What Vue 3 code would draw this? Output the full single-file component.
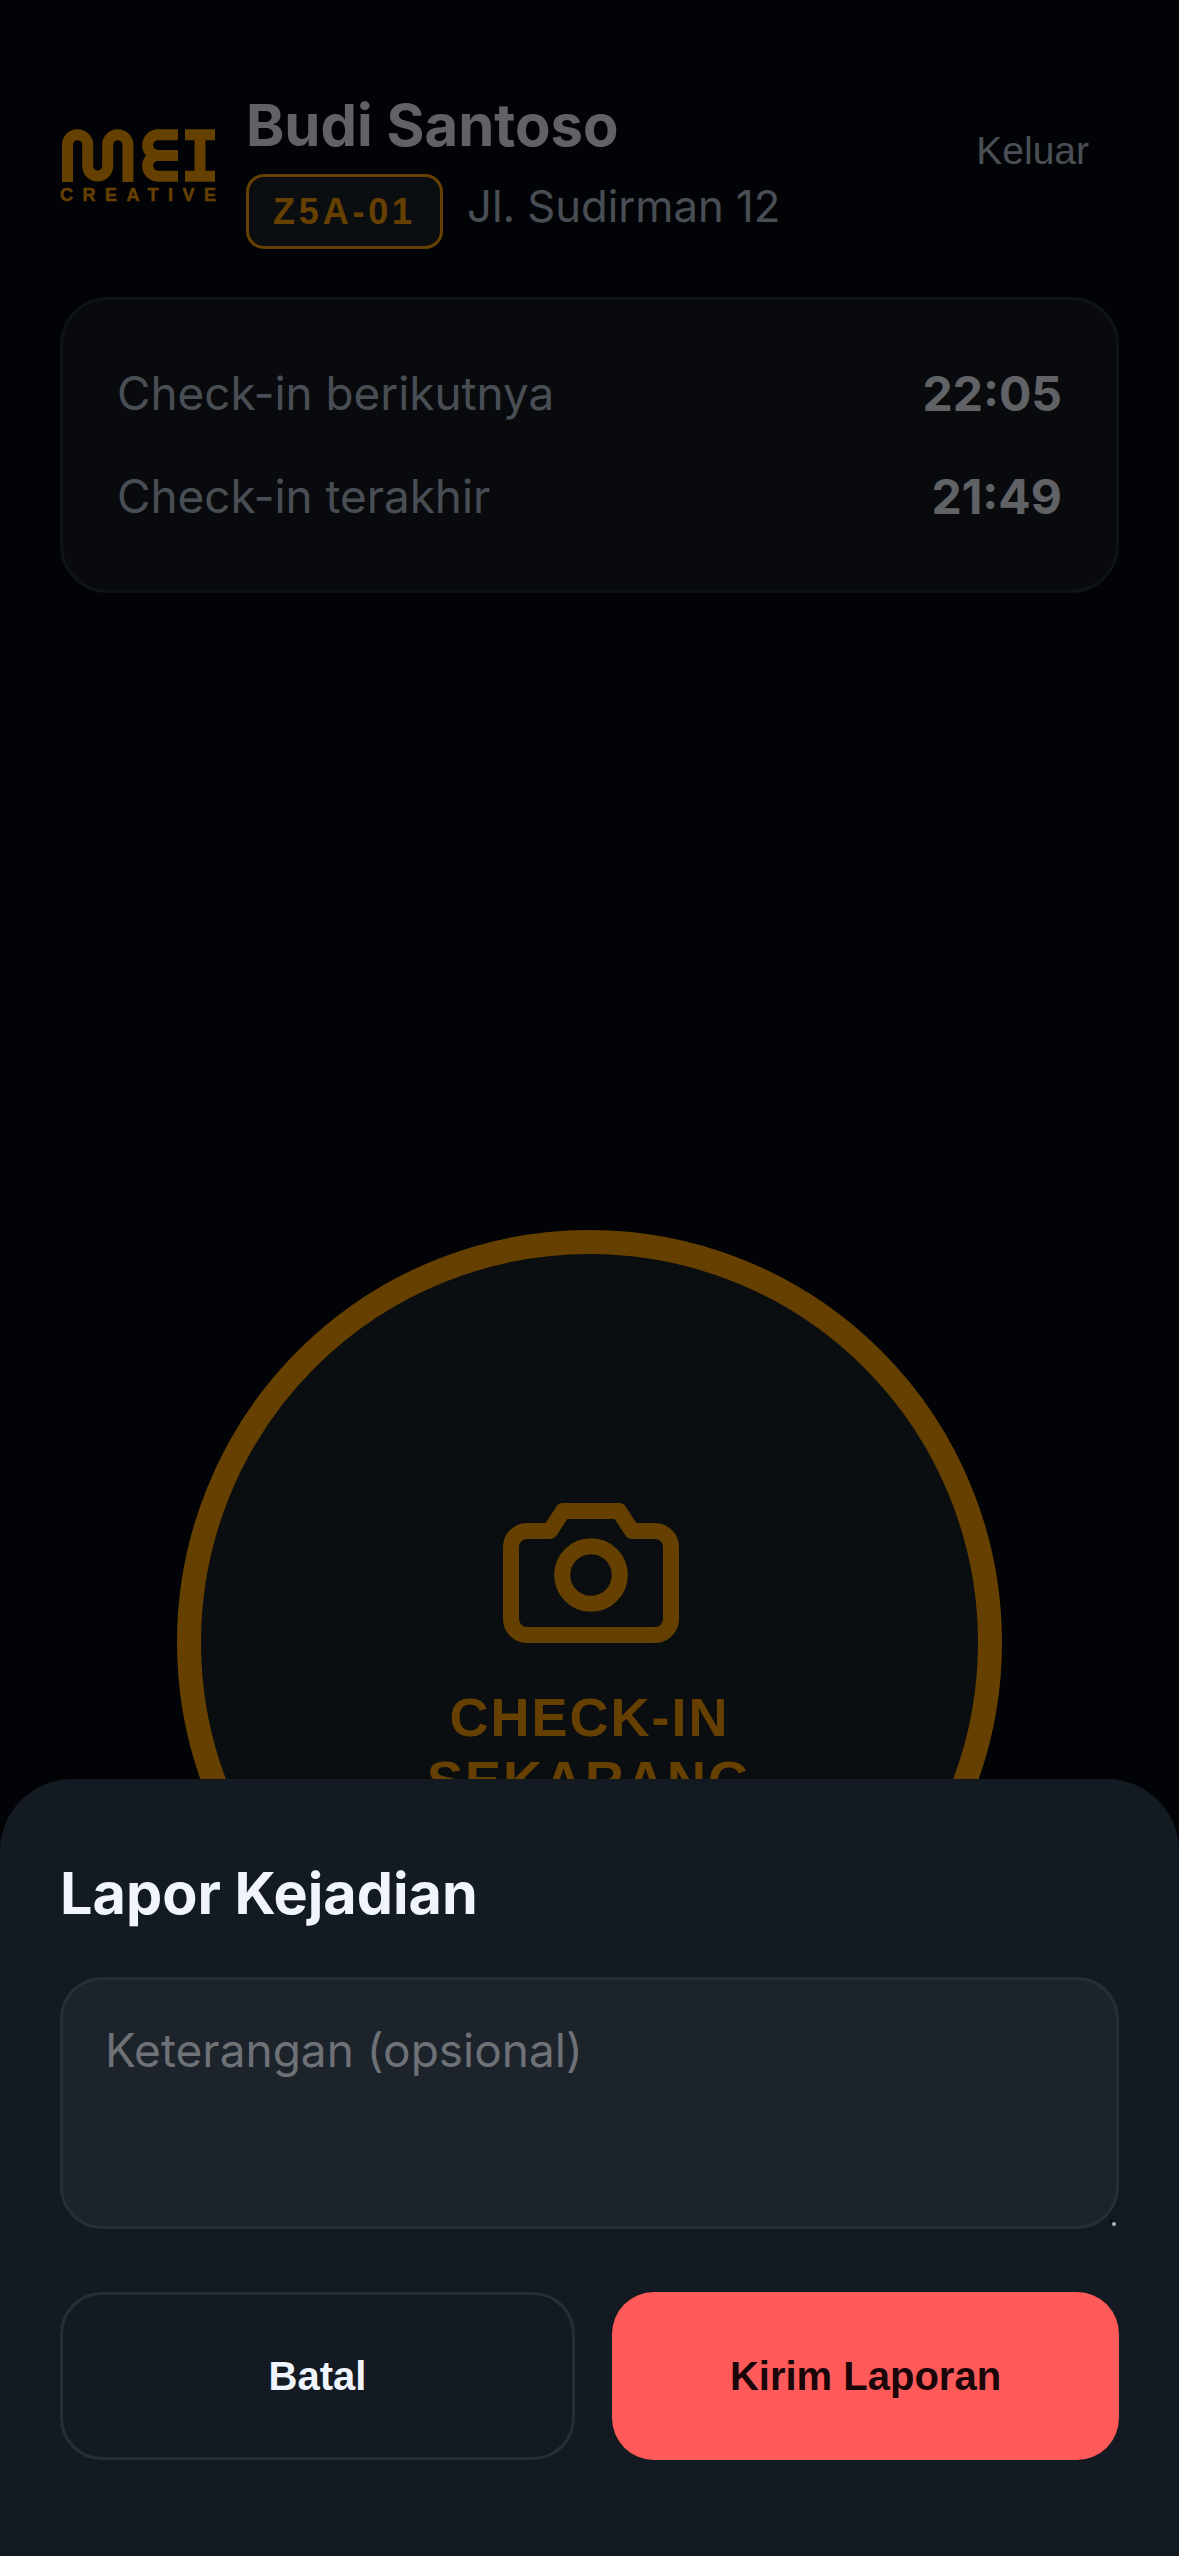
<template>
  <div class="page">
    <div class="main">
      <!-- header -->
      <header class="header">
        <svg class="logo" viewBox="0 0 157 80" width="157" height="80" aria-label="MEI Creative">
          <g transform="translate(-60 -127)" fill="none" stroke="#ffa000" stroke-width="11">
            <path d="M67.5 182V144.8a10.1 10.1 0 0 1 20.2 0V166a10 10 0 0 0 20 0V144.8a10.1 10.1 0 0 1 20.2 0V182" />
            <path d="M178 134.8H158A10.35 10.35 0 0 0 158 155.5H178M158 155.5A10.35 10.35 0 0 0 158 176.2H178" />
            <path d="M185 134.8H215M200 134.8V176.2M185 176.2H215" />
          </g>
          <text x="0" y="74" class="logo-text" textLength="156">CREATIVE</text>
        </svg>
        <div class="who">
          <div class="name">Budi Santoso</div>
          <div class="post">
            <span class="badge">Z5A-01</span>
            <span class="address">Jl. Sudirman 12</span>
          </div>
        </div>
        <button class="logout">Keluar</button>
      </header>

      <!-- jadwal -->
      <section class="card">
        <div v-for="row in rows" :key="row.label" class="row">
          <span class="row-label">{{ row.label }}</span>
          <span class="row-time">{{ row.time }}</span>
        </div>
      </section>

      <!-- tombol check-in -->
      <div class="checkin">
        <svg class="camera" viewBox="0 0 176 140" width="176" height="140" fill="none" stroke="#ffa000" stroke-width="16" stroke-linejoin="round">
          <path d="M60 8H116L129 28H152a16 16 0 0 1 16 16V116a16 16 0 0 1-16 16H24a16 16 0 0 1-16-16V44a16 16 0 0 1 16-16H47Z" />
          <circle cx="88" cy="72" r="28.8" />
        </svg>
        <div class="checkin-text">CHECK-IN<br>SEKARANG</div>
      </div>
    </div>

    <div class="overlay"></div>

    <!-- sheet lapor -->
    <div class="sheet">
      <h2 class="sheet-title">Lapor Kejadian</h2>
      <div class="note-wrap">
        <textarea class="note" placeholder="Keterangan (opsional)"></textarea>
      </div>
      <div class="actions">
        <button class="btn btn-cancel">Batal</button>
        <button class="btn btn-send">Kirim Laporan</button>
      </div>
    </div>
  </div>
</template>

<script setup>
const rows = [
  { label: 'Check-in berikutnya', time: '22:05' },
  { label: 'Check-in terakhir', time: '21:49' }
]
</script>

<style>
html, body {
  margin: 0;
  background: #020306;
}
</style>

<style scoped>
* {
  box-sizing: border-box;
}

.page {
  position: relative;
  width: 1179px;
  height: 2556px;
  overflow: hidden;
  background: #05080f;
  font-family: Inter, 'Liberation Sans', sans-serif;
}

.main {
  padding: 90px 60px 0;
}

.header {
  display: flex;
  align-items: flex-start;
  margin-bottom: 48px;
}

.logo {
  flex: none;
  margin-top: 37px;
  margin-right: 29px;
}

.logo-text {
  font-family: 'Liberation Sans', Arial, sans-serif;
  font-weight: 700;
  font-size: 18px;
  fill: #ffa000;
  stroke: #ffa000;
  stroke-width: 0.4px;
}

.who {
  flex: 1;
}

.name {
  font-size: 58px;
  font-weight: 700;
  line-height: 70px;
  color: #f0f5fd;
}

.post {
  display: flex;
  align-items: center;
  gap: 24px;
  margin-top: 14px;
}

.badge {
  width: 197px;
  height: 75px;
  border: 3px solid #ffa000;
  border-radius: 18px;
  background: #1c232b;
  color: #ffa000;
  font-family: 'Liberation Sans', Arial, sans-serif;
  font-weight: 700;
  font-size: 36px;
  letter-spacing: 3.8px;
  display: flex;
  align-items: center;
  justify-content: center;
}

.address {
  margin-top: -10px;
  font-size: 43.6px;
  color: #b4c3d2;
}

.logout {
  margin: 39px 30px 0 0;
  padding: 0;
  border: 0;
  background: none;
  color: #b9c6d4;
  font-family: 'Liberation Sans', Arial, sans-serif;
  font-size: 39px;
}

.card {
  display: flex;
  flex-direction: column;
  gap: 49px;
  height: 296px;
  padding: 66px 54px;
  border: 3px solid #272e38;
  border-radius: 48px;
  background: #161b22;
}

.row {
  display: flex;
  justify-content: space-between;
  align-items: center;
  height: 54px;
}

.row-label {
  font-size: 45.8px;
  color: #b4c3d2;
}

.row-time {
  font-size: 48px;
  font-weight: 700;
  color: #f0f5fd;
}

.checkin {
  display: flex;
  flex-direction: column;
  align-items: center;
  width: 825px;
  height: 825px;
  margin: 637px auto 0;
  padding-top: 249px;
  border: 24px solid #ffa000;
  border-radius: 50%;
  background: #1c232b;
}

.camera {
  margin-left: 3px;
}

.checkin-text {
  margin-top: 43px;
  text-align: center;
  font-family: 'Liberation Sans', Arial, sans-serif;
  font-weight: 700;
  font-size: 54px;
  line-height: 63px;
  letter-spacing: 2px;
  color: #ffa000;
}

.overlay {
  position: absolute;
  inset: 0;
  background: rgba(0, 0, 0, 0.6);
}

.sheet {
  position: absolute;
  left: 0;
  right: 0;
  bottom: 0;
  height: 777px;
  padding: 75px 60px 0;
  border-radius: 72px 72px 0 0;
  background: #131a21;
}

.sheet-title {
  margin: 0 0 45px;
  font-size: 57.5px;
  font-weight: 700;
  line-height: 78px;
  color: #f0f5fd;
}

.note-wrap {
  position: relative;
}

/* sisa resize handle di sudut */
.note-wrap::after {
  content: '';
  position: absolute;
  right: 3px;
  bottom: 3px;
  width: 4px;
  height: 4px;
  border-radius: 50%;
  background: #b0b3b6;
  box-shadow: -3px -3px 0 #0b0e12;
}

.note {
  display: block;
  width: 100%;
  height: 252px;
  padding: 43px 42px;
  border: 3px solid #272e38;
  border-radius: 42px;
  background: #1c232b;
  color: #f0f5fd;
  font-family: Inter, 'Liberation Sans', sans-serif;
  font-size: 46px;
  line-height: 54px;
  outline: none;
  resize: none;
}

.note::placeholder {
  color: #6e7175;
  opacity: 1;
}

.actions {
  display: grid;
  grid-template-columns: 515fr 507fr;
  gap: 37px;
  margin-top: 63px;
}

.btn {
  height: 168px;
  min-width: 0;
  padding: 0;
  border-radius: 42px;
  font-family: 'Liberation Sans', Arial, sans-serif;
  font-weight: 700;
  font-size: 40px;
}

.btn-cancel {
  border: 3px solid #272e38;
  background: none;
  color: #f0f5fd;
}

.btn-send {
  border: 0;
  background: #ff5a5a;
  color: #1a0508;
}
</style>
